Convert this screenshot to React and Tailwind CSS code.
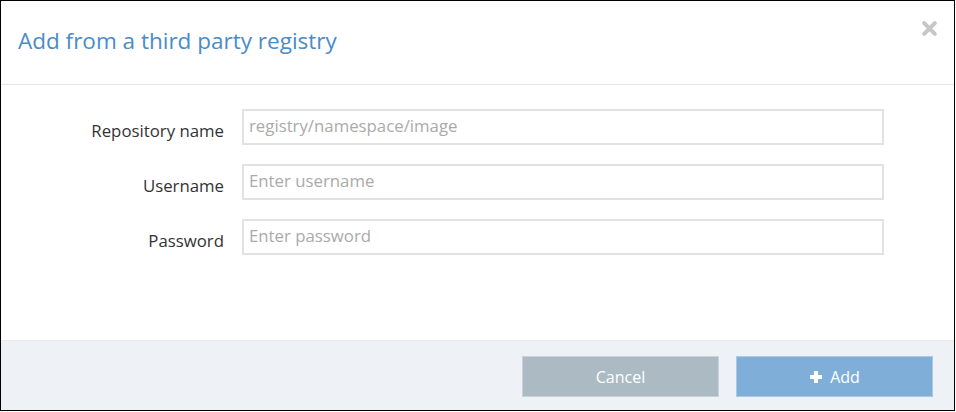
import React from "react";

const FIELDS = [
  { label: "Repository name", placeholder: "registry/namespace/image", type: "text" },
  { label: "Username", placeholder: "Enter username", type: "text" },
  { label: "Password", placeholder: "Enter password", type: "password" },
];

function CloseIcon() {
  return (
    <svg viewBox="0 0 16 16" className="w-[17px] h-[17px]" aria-hidden="true">
      <path d="M3 3 L13 13 M13 3 L3 13" stroke="#c6c6c6" strokeWidth="3.8" strokeLinecap="round" />
    </svg>
  );
}

function PlusIcon() {
  return (
    <svg viewBox="0 0 14 14" className="w-[14px] h-[14px] shrink-0" aria-hidden="true">
      <path d="M7 1 V13 M1 7 H13" stroke="#fff" strokeWidth="4" />
    </svg>
  );
}

export default function App() {
  return (
    <div
      className="w-[955px] h-[411px] border border-black bg-white flex flex-col"
      style={{ fontFamily: '"Open Sans", "Noto Sans", sans-serif' }}
    >
      {/* header */}
      <div className="h-[84px] shrink-0 flex items-center justify-between border-b border-[#e3e3e3] pl-[17px] pr-[16px]">
        <h2 className="text-[22.5px] leading-none text-[#4a8cc7] pb-[2px]">Add from a third party registry</h2>
        <button className="self-start mt-[19px] p-0"><CloseIcon /></button>
      </div>

      {/* body */}
      <div className="flex-1 pt-[24px]">
        <div className="flex flex-col gap-[19px]">
          {FIELDS.map((f) => (
            <div key={f.label} className="flex items-center">
              <label className="w-[223px] text-right text-[16.8px] text-[#333] pt-[8px]">{f.label}</label>
              <input
                type={f.type}
                placeholder={f.placeholder}
                className="ml-[18px] w-[642px] h-[36px] border-2 border-[#e2e2e2] pl-[5px] pr-[5px] pb-[4px] text-[16.8px] text-[#333] placeholder:text-[#aaaaaa] outline-none"
              />
            </div>
          ))}
        </div>
      </div>

      {/* footer */}
      <div className="h-[70px] shrink-0 bg-[#eef1f6] border-t border-[#e6e9ee] flex items-start justify-end gap-[17px] pt-[15px] pr-[21px]">
        <button className="w-[197px] h-[41px] bg-[#acbac4] border border-[#c9d2da] text-white text-[16px]">Cancel</button>
        <button className="w-[197px] h-[41px] bg-[#7fafd9] border border-[#a9c8e5] text-white text-[16px] flex items-center justify-center gap-[7px]">
          <PlusIcon />
          Add
        </button>
      </div>
    </div>
  );
}
